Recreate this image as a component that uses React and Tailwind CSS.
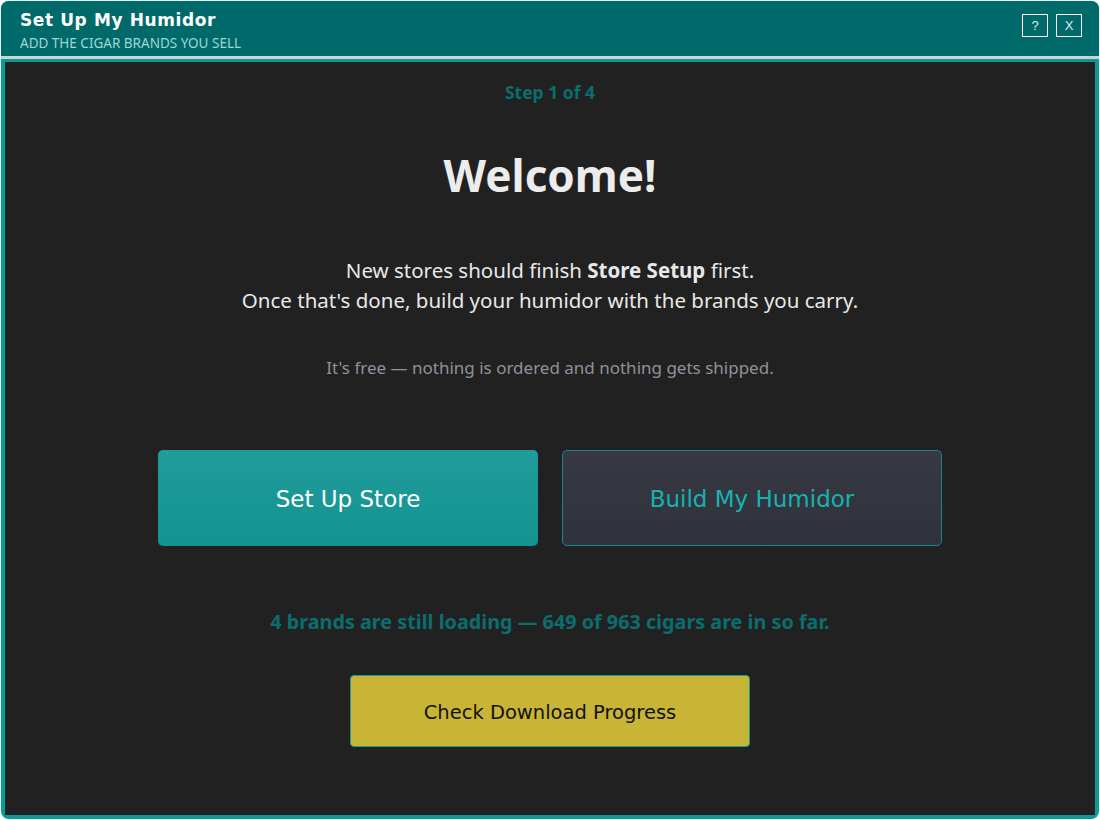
import React from "react";

const ui = { fontFamily: '"Noto Sans", "Open Sans", sans-serif' };
const btn = { fontFamily: '"DejaVu Sans", Tahoma, sans-serif' };

function TitleButton({ children }) {
  return (
    <button
      className="w-[26px] h-[23px] border border-white text-[13px] text-[#d8eeee] flex items-center justify-center leading-none"
      style={{ fontFamily: '"Liberation Sans", Arial, sans-serif' }}
    >
      {children}
    </button>
  );
}

export default function App() {
  return (
    <div className="w-[1100px] h-[820px] bg-[#e9f1f1] p-px rounded-[9px]" style={ui}>
      <div className="w-full h-full rounded-[8px] bg-[#0a9a9a] flex flex-col overflow-hidden">
        {/* title bar */}
        <div className="h-[55px] bg-[#006a6a] flex items-start justify-between pl-[19px] pr-[17px]">
          <div className="pt-[9px]">
            <div
              className="text-[17px] font-bold text-white leading-[20px] tracking-[0.6px]"
              style={{ fontFamily: '"DejaVu Sans", Verdana, sans-serif' }}
            >
              Set Up My Humidor
            </div>
            <div className="text-[13.5px] text-[#9fd6d6] leading-[18px] mt-[4px]">
              ADD THE CIGAR BRANDS YOU SELL
            </div>
          </div>
          <div className="flex gap-[8px] pt-[13px]">
            <TitleButton>?</TitleButton>
            <TitleButton>X</TitleButton>
          </div>
        </div>
        <div className="h-[3px] bg-[#c9d3d3]" />
        {/* body */}
        <div className="flex-1 mx-[4px] mt-[3px] mb-[4px] bg-[#212121] flex flex-col items-center">
          <div className="mt-[18px] text-[17.5px] font-bold text-[#0a6e6e] leading-[24px]">Step 1 of 4</div>
          <h1 className="mt-[43px] text-[44px] font-bold text-[#ececec] leading-[56px]">Welcome!</h1>
          <div className="mt-[52px] text-[20.5px] text-[#e8e8e8] leading-[30px] text-center">
            <div>
              New stores should finish <span className="font-bold">Store Setup</span> first.
            </div>
            <div>Once that's done, build your humidor with the brands you carry.</div>
          </div>
          <div className="mt-[41px] text-[17px] text-[#8e929c] leading-[24px]">
            It's free — nothing is ordered and nothing gets shipped.
          </div>
          <div className="mt-[70px] flex gap-[24px]">
            <button
              className="w-[380px] h-[96px] pt-[2px] rounded-[5px] bg-gradient-to-b from-[#209c9a] to-[#139390] text-white text-[23px]"
              style={btn}
            >
              Set Up Store
            </button>
            <button
              className="w-[380px] h-[96px] pt-[2px] rounded-[5px] border border-[#138a88] bg-gradient-to-b from-[#373843] to-[#2f323b] text-[#16b3b0] text-[23px]"
              style={btn}
            >
              Build My Humidor
            </button>
          </div>
          <div className="mt-[63px] text-[19.8px] font-bold text-[#0a6e6e] leading-[26px]">
            4 brands are still loading — 649 of 963 cigars are in so far.
          </div>
          <button
            className="mt-[40px] w-[400px] h-[72px] pt-[3px] rounded-[4px] border border-[#1a9e96] bg-[#c8b535] text-[#111] text-[19.5px]"
            style={btn}
          >
            Check Download Progress
          </button>
        </div>
      </div>
    </div>
  );
}
